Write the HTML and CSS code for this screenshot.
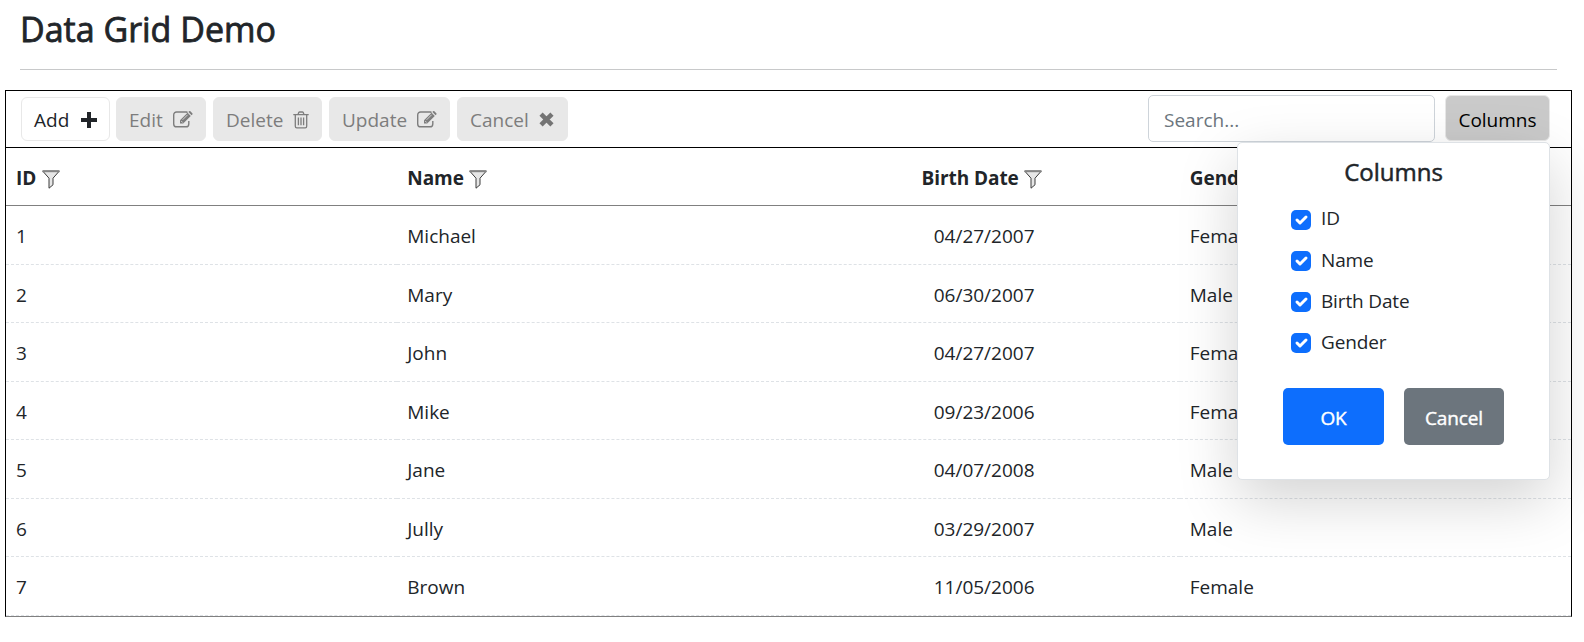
FILE: index.html
```html
<!DOCTYPE html>
<html lang="en">
<head>
<meta charset="utf-8">
<title>Data Grid Demo</title>
<link rel="stylesheet" href="styles.css">
</head>
<body>
<svg class="sprite" aria-hidden="true">
  <symbol id="filter" viewBox="0 0 18 19"><path d="M.8 1.200L7 8.200v10l4-3.400V8.200l6.200-7z" fill="#e6e6e6" stroke="#3c3c3c" stroke-width="1"/><path d="M.5 1.200h17" stroke="#858585" stroke-width="2"/></symbol>
  <symbol id="plus" viewBox="0 0 16 16"><path d="M6 0h4v6h6v4h-6v6H6v-6H0V6h6z" fill="currentColor"/></symbol>
  <symbol id="edit" viewBox="0 0 20 17"><path d="M14.500 1.600A3 3 0 0 0 13.400 1H3.600A2.900 2.900 0 0 0 .7 3.900v9A2.900 2.900 0 0 0 3.600 15.800h9.300a2.900 2.900 0 0 0 2.900-2.900V10" fill="none" stroke="currentColor" stroke-width="1.400"/><path d="M7 12.500V9.200L14.600 1.700l3.200 3.200-7.600 7.600zM15.400.9l.6-.6q.7-.6 1.400 0l1.900 1.900q.6.700 0 1.400l-.7.600z" fill="currentColor"/><path d="M8.100 9.900l1.600 1.600M9.600 8.800l5-5" stroke="#e8e8e8" stroke-width=".8"/></symbol>
  <symbol id="trash" viewBox="0 0 16 18"><path d="M.3 3.700h15.400M5 3.600l.8-2q.2-.6.900-.6h2.600q.7 0 .9.600l.8 2M2.300 3.700v11.500q0 1.700 1.500 1.700h8.400q1.500 0 1.500-1.700V3.700M5.400 6.500v7.700M8 6.500v7.700M10.600 6.500v7.700" fill="none" stroke="currentColor" stroke-width="1.300"/></symbol>
  <symbol id="times" viewBox="0 0 14 14"><path d="M1.900 1.900l10.200 10.200m0-10.200l-10.200 10.200" stroke="currentColor" stroke-width="4.200"/></symbol>
  <symbol id="check" viewBox="0 0 20 20"><path d="M6 10l3 3 6-6" fill="none" stroke="#fff" stroke-width="3" stroke-linecap="round" stroke-linejoin="round"/></symbol>
</svg>
<header class="page-head"><h1>Data Grid Demo</h1></header>
<main class="grid">
  <div class="toolbar">
    <button class="tool add">Add <svg class="i-plus"><use href="#plus"/></svg></button>
    <button class="tool off edit">Edit <svg class="i-edit"><use href="#edit"/></svg></button>
    <button class="tool off delete">Delete <svg class="i-trash"><use href="#trash"/></svg></button>
    <button class="tool off update">Update <svg class="i-edit"><use href="#edit"/></svg></button>
    <button class="tool off cancel">Cancel <svg class="i-times"><use href="#times"/></svg></button>
    <input class="search" type="text" placeholder="Search...">
    <div class="picker">
      <button class="tool toggle">Columns</button>
      <section class="menu">
        <h2>Columns</h2>
        <ul>
          <li><svg class="box"><use href="#check"/></svg><span>ID</span></li>
          <li><svg class="box"><use href="#check"/></svg><span>Name</span></li>
          <li><svg class="box"><use href="#check"/></svg><span>Birth Date</span></li>
          <li><svg class="box"><use href="#check"/></svg><span>Gender</span></li>
        </ul>
        <div class="actions"><button class="ok">OK</button><button class="dismiss">Cancel</button></div>
      </section>
    </div>
  </div>
  <div class="row head"><div><span>ID</span><svg class="i-filter"><use href="#filter"/></svg></div><div><span>Name</span><svg class="i-filter"><use href="#filter"/></svg></div><div class="date"><span>Birth Date</span><svg class="i-filter"><use href="#filter"/></svg></div><div><span>Gender</span><svg class="i-filter"><use href="#filter"/></svg></div></div>
  <div class="row"><div>1</div><div>Michael</div><div class="date">04/27/2007</div><div>Female</div></div>
  <div class="row"><div>2</div><div>Mary</div><div class="date">06/30/2007</div><div>Male</div></div>
  <div class="row"><div>3</div><div>John</div><div class="date">04/27/2007</div><div>Female</div></div>
  <div class="row"><div>4</div><div>Mike</div><div class="date">09/23/2006</div><div>Female</div></div>
  <div class="row"><div>5</div><div>Jane</div><div class="date">04/07/2008</div><div>Male</div></div>
  <div class="row"><div>6</div><div>Jully</div><div class="date">03/29/2007</div><div>Male</div></div>
  <div class="row"><div>7</div><div>Brown</div><div class="date">11/05/2006</div><div>Female</div></div>
</main>
</body>
</html>
```
FILE: styles.css
```css
* { box-sizing: border-box; }
body { margin: 0; background: #fff; color: #212529; font: 19px/30px "Open Sans", "Noto Sans", sans-serif; overflow: hidden; }
.sprite { position: absolute; width: 0; height: 0; }
svg { flex: none; }
button, input { font: inherit; letter-spacing: inherit; color: inherit; }
.page-head { margin: 0 27px 0 20px; height: 70px; border-bottom: 1px solid #c8c9ca; }
h1 { margin: 0; padding-top: 8px; font-size: 34px; line-height: 42px; font-weight: 500; -webkit-text-stroke: .8px currentColor; }
.grid { margin: 20px 12px 0 5px; height: 527px; border: 1px solid #000; border-bottom-color: #808080; }
.toolbar { height: 57px; padding: 4px 21px 0 15px; display: flex; align-items: flex-start; border-bottom: 1px solid #000; }
.tool { height: 44px; margin: 2px 7px 0 0; padding: 1px 12px 0; display: flex; align-items: center; justify-content: space-between; border: 1px solid #e8e8e8; border-radius: 6px; background: #fff; white-space: nowrap; }
.off { background: #e8e8e8; color: #7d7d7d; }
.add { width: 89px; margin-right: 6px; }
.edit { width: 90px; }
.delete { width: 109px; }
.update { width: 121px; }
.cancel { width: 111px; padding-right: 13px; }
.i-plus { width: 16px; height: 16px; }
.i-edit { width: 20px; height: 17px; }
.i-trash { width: 16px; height: 18px; }
.i-times { width: 15px; height: 15px; color: #747474; }
.search { margin-left: auto; width: 287px; height: 47px; padding: 2px 15px 0; border: 1px solid #ced4da; border-radius: 5px; background: #fff; }
.search::placeholder { color: #6c757d; opacity: 1; }
.picker { position: relative; margin-left: 10px; }
.toggle { width: 105px; height: 46px; margin: 0; padding-top: 3px; justify-content: center; background: #cacaca; color: #000; }
.menu { position: absolute; top: 47px; right: 0; width: 313px; height: 338px; background: #fff; border: 1px solid #dee2e6; border-radius: 5px; box-shadow: 0 20px 60px rgba(0,0,0,.175); }
h2 { margin: 14px 0 0; font-size: 24px; line-height: 30px; font-weight: 500; text-align: center; -webkit-text-stroke: .5px currentColor; }
ul { list-style: none; margin: 12px 0 0 53px; padding: 0; }
li { display: flex; align-items: center; gap: 10px; height: 41px; letter-spacing: -.15px; }
li span { margin-bottom: 2px; }
li:first-child span { margin-bottom: 3px; }
.box { width: 20px; height: 20px; border-radius: 5px; background: #0d6efd; }
.actions { display: flex; gap: 20px; margin: 25px 0 0 45px; }
.actions button { height: 57px; border: 0; border-radius: 5px; color: #fff; padding: 2px 0 0; -webkit-text-stroke: .4px currentColor; letter-spacing: -.1px; }
.ok { width: 101px; background: #0d6efd; }
.dismiss { width: 100px; background: #6c757d; }
.row { display: grid; grid-template-columns: repeat(4, 1fr); height: 58.5px; }
.row > div { display: flex; align-items: center; padding: 2.5px 10px 0; border-bottom: 1px dashed #dee2e6; }
.row > .date { justify-content: center; }
.row.head { height: 58px; font-weight: 700; }
.row.head > div { padding-top: 2px; border-bottom: 1px solid #808080; gap: 5px; }
.row.head > .date { padding-right: 15px; }
.row.head span { letter-spacing: -.05px; }
.row.head > div:first-child { gap: 6px; }
.i-filter { width: 18px; height: 19px; margin-top: 4px; }
```
